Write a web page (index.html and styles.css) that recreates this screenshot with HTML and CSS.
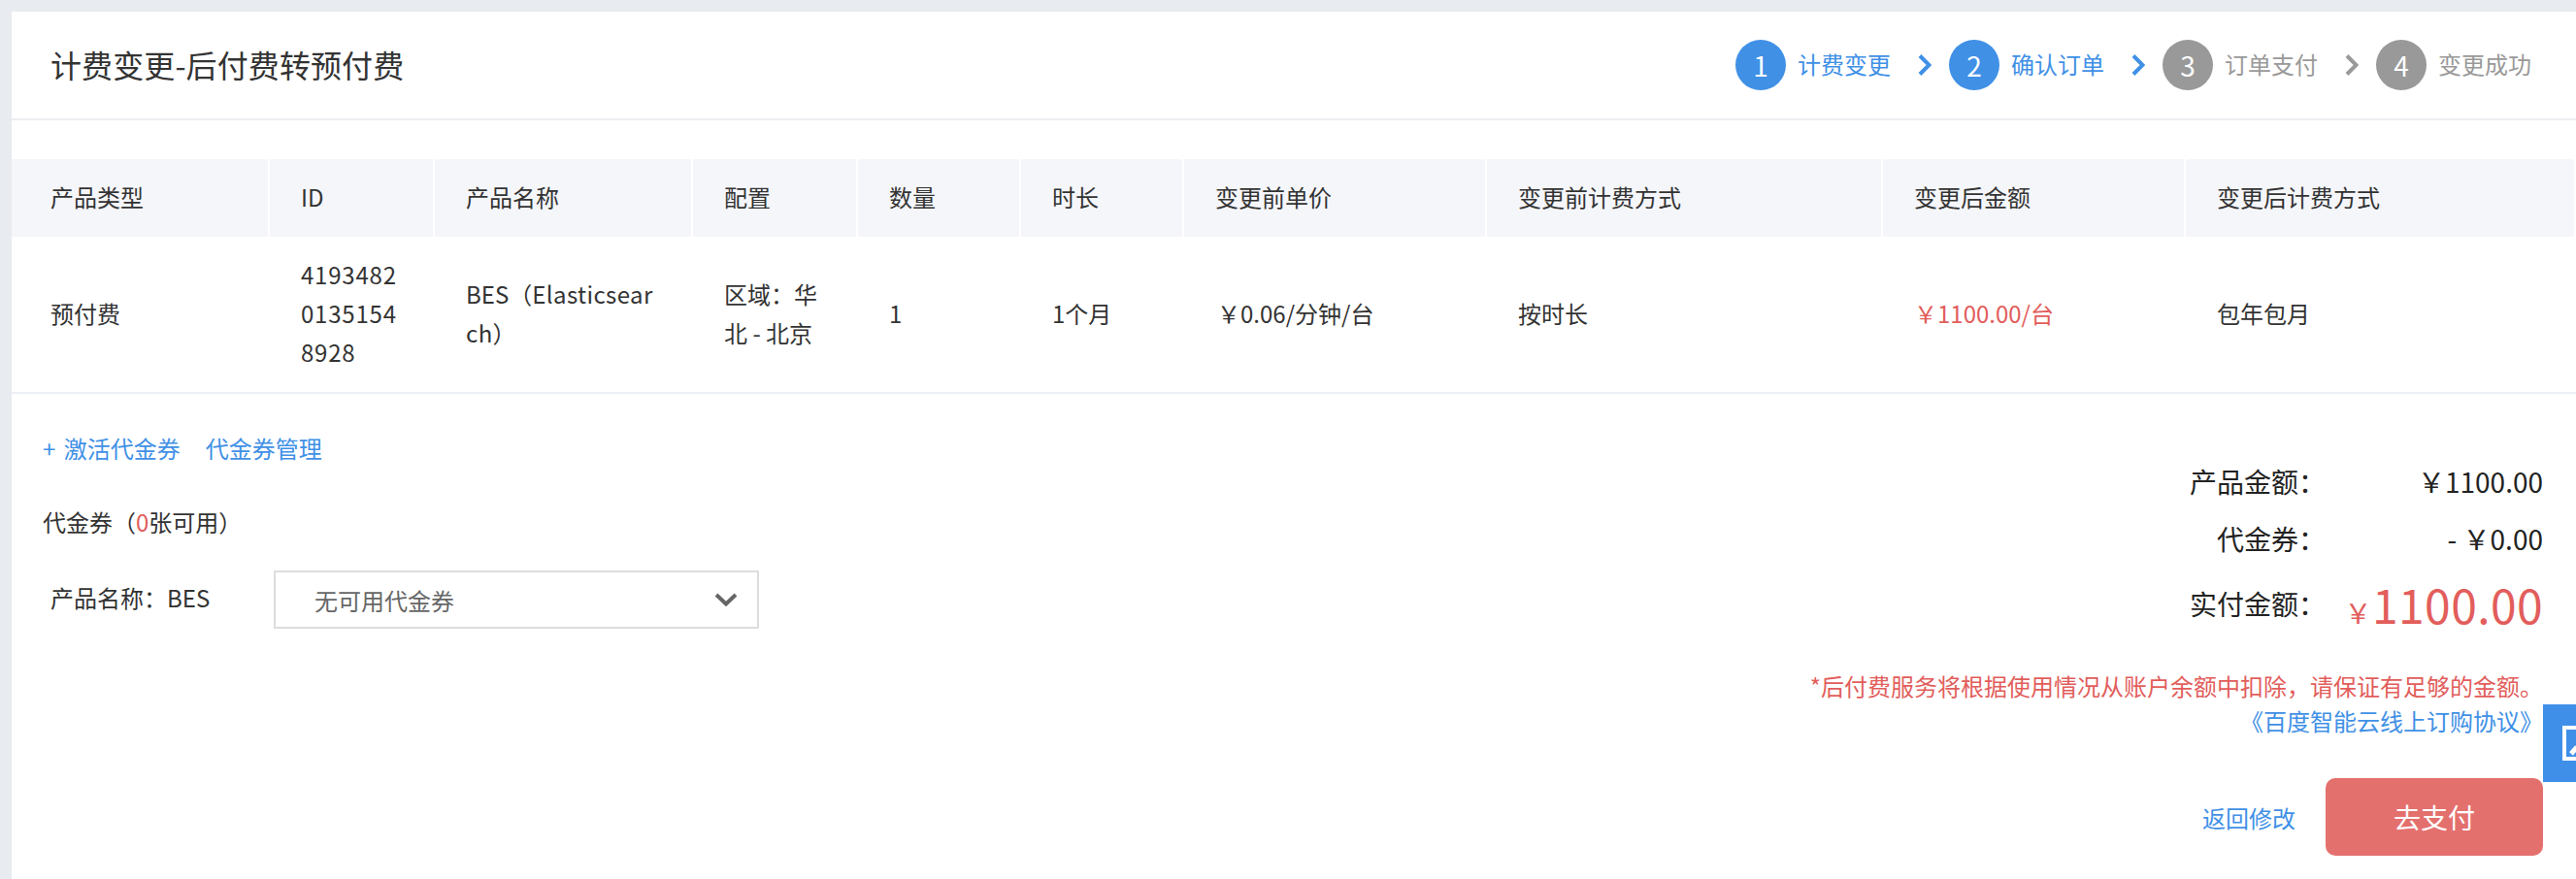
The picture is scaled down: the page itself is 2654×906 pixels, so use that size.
FILE: index.html
```html
<!DOCTYPE html>
<html lang="zh-CN">
<head>
    <meta charset="UTF-8">
    <title>计费变更</title>
    <link rel="stylesheet" href="styles.css">
</head>
<body>

<div class="page">
    <div class="header">
        <h1>计费变更-后付费转预付费</h1>
        <div class="steps">
            <div class="step active"><span class="step-num">1</span><span class="step-label">计费变更</span>
                <svg class="step-arrow" viewBox="0 0 14 22"><path d="M2 1.5 L11.5 11 L2 20.5" fill="none" stroke="currentColor" stroke-width="4"/></svg>
            </div>
            <div class="step active"><span class="step-num">2</span><span class="step-label">确认订单</span>
                <svg class="step-arrow" viewBox="0 0 14 22"><path d="M2 1.5 L11.5 11 L2 20.5" fill="none" stroke="currentColor" stroke-width="4"/></svg>
            </div>
            <div class="step"><span class="step-num">3</span><span class="step-label">订单支付</span>
                <svg class="step-arrow" viewBox="0 0 14 22"><path d="M2 1.5 L11.5 11 L2 20.5" fill="none" stroke="currentColor" stroke-width="4"/></svg>
            </div>
            <div class="step last"><span class="step-num">4</span><span class="step-label">变更成功</span></div>
        </div>
    </div>

    <div class="order-table">
        <div class="row head">
            <div class="cell c1">产品类型</div>
            <div class="cell c2">ID</div>
            <div class="cell c3">产品名称</div>
            <div class="cell c4">配置</div>
            <div class="cell c5">数量</div>
            <div class="cell c6">时长</div>
            <div class="cell c7">变更前单价</div>
            <div class="cell c8">变更前计费方式</div>
            <div class="cell c9">变更后金额</div>
            <div class="cell c10">变更后计费方式</div>
        </div>
        <div class="row body">
            <div class="cell c1">预付费</div>
            <div class="cell c2 wide">4193482<br>0135154<br>8928</div>
            <div class="cell c3"><div>BES（<span class="wider">Elasticsear</span><br><span class="wider">ch</span>）</div></div>
            <div class="cell c4">区域：华<br>北 - 北京</div>
            <div class="cell c5">1</div>
            <div class="cell c6">1个月</div>
            <div class="cell c7">￥0.06/分钟/台</div>
            <div class="cell c8">按时长</div>
            <div class="cell c9 red">￥1100.00/台</div>
            <div class="cell c10">包年包月</div>
        </div>
    </div>

    <div class="bottom">
        <div class="voucher">
            <div class="voucher-links"><a>+ 激活代金券</a><a>代金券管理</a></div>
            <div class="voucher-count">代金券（<span class="red">0</span>张可用）</div>
            <div class="voucher-row">
                <span class="voucher-name">产品名称：BES</span>
                <div class="select">无可用代金券
                    <svg class="select-arrow" viewBox="0 0 24 14"><path d="M2 2 L12 11.5 L22 2" fill="none" stroke="currentColor" stroke-width="4"/></svg>
                </div>
            </div>
        </div>
        <div class="summary">
            <div class="sum-row first"><span class="sum-label">产品金额：</span><span class="sum-value">￥1100.00</span></div>
            <div class="sum-row second"><span class="sum-label">代金券：</span><span class="sum-value">- ￥0.00</span></div>
            <div class="sum-row total"><span class="sum-label">实付金额：</span><span class="sum-value red"><small>￥</small>1100.00</span></div>
            <p class="notice red">*后付费服务将根据使用情况从账户余额中扣除，请保证有足够的金额。</p>
            <p class="agreement"><a>《百度智能云线上订购协议》</a></p>
            <div class="actions">
                <a class="back">返回修改</a>
                <button class="pay">去支付</button>
            </div>
        </div>
    </div>
</div>

<div class="side-tab">
    <svg viewBox="0 0 36 36">
        <path d="M2 2 H34 V34 H2 Z" fill="none" stroke="#fff" stroke-width="4"/>
        <path d="M9 29 L15 22" fill="none" stroke="#fff" stroke-width="5"/>
    </svg>
</div>

</body>
</html>
```
FILE: styles.css
```css
html, body {
    margin: 0;
    height: 100%;
    overflow: hidden;
}
body {
    padding: 12px 0 0 12px;
    box-sizing: border-box;
    background-color: #e8ebef;
    font-family: "Noto Sans CJK SC", "Liberation Sans", sans-serif;
    font-size: 24px;
    color: #333;
}
.page {
    background-color: white;
    height: 100%;
}
.header {
    display: flex;
    justify-content: space-between;
    align-items: center;
    height: 110px;
    border-bottom: 2px solid #ecedf0;
    padding: 0 46px 0 40px;
}
h1 {
    margin: 0 0 3px;
    font-size: 32px;
    font-weight: normal;
    letter-spacing: 0.1px;
}
.steps {
    display: flex;
}
.step {
    display: flex;
    align-items: center;
    width: 220px;
    color: #999;
}
.step.last {
    width: auto;
}
.step.active {
    color: #4090e6;
}
.step-num {
    width: 52px;
    height: 52px;
    border-radius: 50%;
    background-color: #999;
    color: white;
    display: flex;
    align-items: center;
    justify-content: center;
    font-size: 28px;
    margin-right: 12px;
}
.active .step-num {
    background-color: #4090e6;
}
.step-label {
    width: 96px;
    padding-bottom: 3px;
}
.step-arrow {
    width: 14px;
    height: 22px;
    margin-left: 28px;
}
.order-table {
    margin-top: 40px;
    border-bottom: 2px solid #ecf0f6;
}
.row {
    display: flex;
}
.head {
    height: 80px;
}
.head .cell {
    background-color: #f5f6fa;
    border-right: 2px solid white;
}
.body {
    height: 160px;
}
.cell {
    display: flex;
    align-items: center;
    box-sizing: border-box;
    padding: 0 0 3px 32px;
    line-height: 40px;
}
.c1 { width: 266px; padding-left: 40px; }
.c2 { width: 170px; }
.c3 { width: 266px; }
.c4 { width: 170px; }
.c5 { width: 168px; }
.c6 { width: 168px; }
.c7 { width: 312px; }
.c8 { width: 408px; }
.c9 { width: 312px; }
.c10 { flex: 1; }
.body .c7 {
    padding-left: 34px;
}
.wide {
    letter-spacing: 0.8px;
}
.wider {
    letter-spacing: 0.4px;
}
.red {
    color: #e25d5b;
}
.bottom {
    display: flex;
    justify-content: space-between;
    padding-right: 34px;
}
.voucher {
    padding: 38px 0 0 32px;
}
.voucher-links {
    word-spacing: 3px;
}
.voucher-links a {
    color: #4090e6;
    margin-right: 26px;
}
.voucher-count {
    margin-top: 41px;
}
.voucher-row {
    display: flex;
    align-items: center;
    margin-top: 33px;
    padding-left: 8px;
}
.voucher-name {
    width: 230px;
    padding-bottom: 5px;
}
.select {
    display: flex;
    align-items: center;
    justify-content: space-between;
    box-sizing: border-box;
    width: 500px;
    height: 60px;
    border: 2px solid #ddd;
    padding: 0 20px 0 40px;
    color: #666;
}
.select-arrow {
    width: 24px;
    height: 14px;
    color: #666;
}
.summary {
    display: flex;
    flex-direction: column;
    align-items: flex-end;
    padding-top: 66px;
}
.sum-row {
    display: flex;
    justify-content: space-between;
    align-items: center;
    width: 364px;
    height: 48px;
    font-size: 28px;
    color: #222;
}
.sum-row.first {
    margin-bottom: 11px;
}
.sum-row.second {
    margin-bottom: 14px;
}
.sum-label {
    width: 140px;
    text-align: right;
}
.sum-value {
    white-space: nowrap;
}
.total {
    height: 58px;
}
.total .sum-value {
    font-size: 48px;
    letter-spacing: 0.4px;
}
.total small {
    font-size: 28px;
}
.notice, .agreement {
    margin: 0;
    line-height: 36px;
}
.notice {
    margin-top: 38px;
}
.agreement a {
    color: #4090e6;
}
.actions {
    display: flex;
    align-items: center;
    margin-top: 41px;
}
.back {
    color: #4090e6;
    margin-right: 31px;
}
.pay {
    width: 224px;
    height: 80px;
    border: none;
    border-radius: 10px;
    background-color: #e4706e;
    color: white;
    font-family: inherit;
    font-size: 28px;
}
.side-tab {
    position: absolute;
    right: 0;
    top: 726px;
    width: 34px;
    height: 80px;
    background-color: #3f8fe8;
    overflow: hidden;
}
.side-tab svg {
    position: absolute;
    left: 20px;
    top: 22px;
    width: 36px;
    height: 36px;
}
```
